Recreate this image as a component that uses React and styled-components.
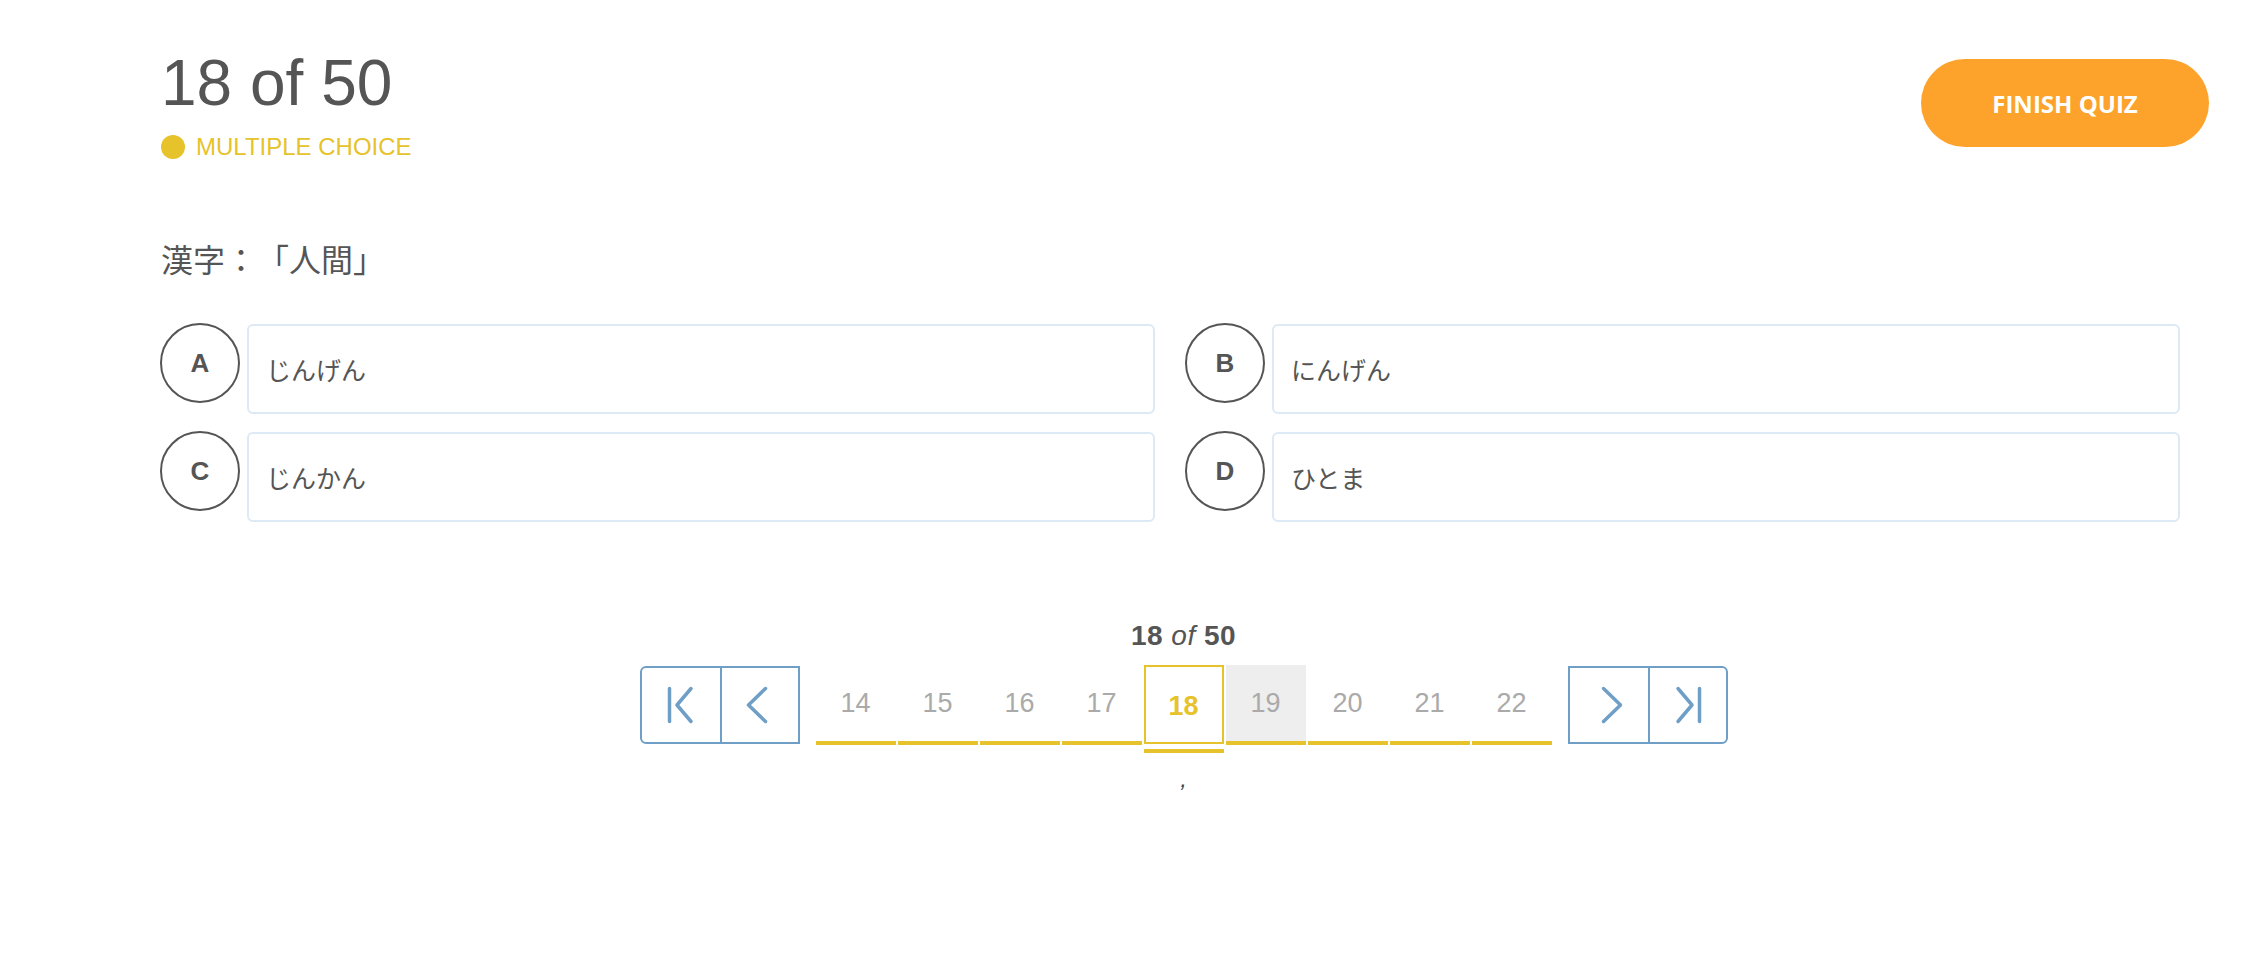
import React from "react";
import styled, { createGlobalStyle, css } from "styled-components";

const yellow = "#e6c22b";
const navBlue = "#6f9fc6";
const textGrey = "#555555";

const GlobalStyle = createGlobalStyle`
  body {
    margin: 0;
    background: #ffffff;
    font-family: "Liberation Sans", Arial, sans-serif;
  }
`;

const Page = styled.div`
  padding: 46px 56px 0 158px;
`;

const Header = styled.header`
  display: flex;
  justify-content: space-between;
  align-items: flex-start;
`;

const Title = styled.h1`
  margin: 0 0 0 3px;
  font-size: 64px;
  line-height: 75px;
  font-weight: 400;
  color: ${textGrey};
`;

const Kind = styled.div`
  display: flex;
  align-items: center;
  gap: 11px;
  margin-top: 12px;
  font-size: 24px;
  line-height: 28px;
  color: ${yellow};
`;

const Dot = styled.span`
  width: 24px;
  height: 24px;
  border-radius: 50%;
  background: ${yellow};
  margin-left: 3px;
`;

const FinishButton = styled.button`
  margin-top: 13px;
  width: 288px;
  height: 88px;
  border: none;
  border-radius: 44px;
  background: #fda22b;
  color: #ffffff;
  font-family: "Open Sans", "Liberation Sans", sans-serif;
  font-weight: 700;
  font-size: 24px;
`;

const Question = styled.p`
  margin: 79px 0 0 3px;
  font-family: "Noto Sans CJK JP", sans-serif;
  font-size: 32px;
  line-height: 36px;
  color: ${textGrey};
  text-spacing-trim: space-all;
`;

const OptionsGrid = styled.div`
  margin-top: 48px;
  margin-left: 2px;
  width: 2020px;
  display: grid;
  grid-template-columns: 1fr 1fr;
  column-gap: 30px;
  row-gap: 18px;
`;

const Option = styled.div`
  display: flex;
  align-items: flex-start;
  gap: 7px;
`;

const Letter = styled.div`
  box-sizing: border-box;
  flex: none;
  width: 80px;
  height: 80px;
  margin-top: -1px;
  border: 2px solid ${textGrey};
  border-radius: 50%;
  display: flex;
  align-items: center;
  justify-content: center;
  font-size: 26px;
  font-weight: 700;
  color: ${textGrey};
`;

const AnswerBox = styled.div`
  box-sizing: border-box;
  flex: 1;
  height: 90px;
  padding-left: 17px;
  border: 2px solid #dde9f4;
  border-radius: 6px;
  display: flex;
  align-items: center;
  font-family: "Noto Sans CJK JP", sans-serif;
  font-size: 25px;
  color: ${textGrey};
`;

const Pager = styled.div`
  margin-top: 99px;
  display: flex;
  flex-direction: column;
  align-items: center;
`;

const PagerLabel = styled.div`
  font-size: 28px;
  line-height: 30px;
  font-weight: 700;
  letter-spacing: 0.5px;
  color: ${textGrey};

  em {
    font-weight: 400;
  }
`;

const PagerRow = styled.div`
  margin-top: 14px;
  display: flex;
  align-items: flex-start;
  gap: 16px;
`;

const NavGroup = styled.div`
  box-sizing: border-box;
  display: flex;
  height: 78px;
  margin-top: 1px;
  border: 2px solid ${navBlue};
  ${(p) =>
    p.side === "left"
      ? css`
          border-radius: 6px 0 0 6px;
        `
      : css`
          border-radius: 0 6px 6px 0;
        `}
`;

const NavButton = styled.button`
  box-sizing: border-box;
  width: 78px;
  height: 100%;
  padding: 0;
  border: none;
  background: none;
  display: flex;
  align-items: center;
  justify-content: center;
  & + & {
    border-left: 2px solid ${navBlue};
  }
`;

const PageList = styled.div`
  display: flex;
  gap: 2px;
`;

const PageItem = styled.div`
  width: 80px;
  display: flex;
  flex-direction: column;
`;

const Cell = styled.div`
  box-sizing: border-box;
  height: ${(p) => (p.active ? "79px" : "76px")};
  display: flex;
  align-items: center;
  justify-content: center;
  font-size: 27px;
  color: ${(p) => (p.active ? yellow : "#aaaaaa")};
  font-weight: ${(p) => (p.active ? 700 : 400)};
  background: ${(p) => (p.hovered ? "#eeeeee" : "transparent")};
  border: ${(p) => (p.active ? `2px solid ${yellow}` : "none")};
  padding-top: ${(p) => (p.active ? "3px" : "0")};
`;

const Bar = styled.div`
  height: 4px;
  margin-top: ${(p) => (p.active ? "5px" : "0")};
  background: ${yellow};
`;

const Stray = styled.div`
  margin-top: 12px;
  font-size: 24px;
  font-style: italic;
  color: #444444;
`;

const NavIcon = ({ kind }) => {
  const paths = {
    first: ["M8.5 3.5V36.5", "M30 3.5L16 20L30 36.5"],
    prev: ["M25.5 3.5L8.5 20L25.5 36.5"],
    next: ["M14.5 3.5L31.5 20L14.5 36.5"],
    last: ["M31.5 3.5V36.5", "M10 3.5L24 20L10 36.5"],
  };
  return (
    <svg width="40" height="40" viewBox="0 0 40 40" fill="none">
      {paths[kind].map((d) => (
        <path
          key={d}
          d={d}
          stroke={navBlue}
          strokeWidth="3.5"
          strokeLinecap="round"
          strokeLinejoin="round"
        />
      ))}
    </svg>
  );
};

const options = [
  { letter: "A", text: "じんげん" },
  { letter: "B", text: "にんげん" },
  { letter: "C", text: "じんかん" },
  { letter: "D", text: "ひとま" },
];

const pages = [14, 15, 16, 17, 18, 19, 20, 21, 22];
const current = 18;

export default function App() {
  return (
    <Page>
      <GlobalStyle />
      <Header>
        <div>
          <Title>18 of 50</Title>
          <Kind>
            <Dot />
            MULTIPLE CHOICE
          </Kind>
        </div>
        <FinishButton>FINISH QUIZ</FinishButton>
      </Header>

      <Question>漢字：「人間」</Question>

      <OptionsGrid>
        {options.map((o) => (
          <Option key={o.letter}>
            <Letter>{o.letter}</Letter>
            <AnswerBox>{o.text}</AnswerBox>
          </Option>
        ))}
      </OptionsGrid>

      <Pager>
        <PagerLabel>
          18 <em>of</em> 50
        </PagerLabel>
        <PagerRow>
          <NavGroup side="left">
            <NavButton>
              <NavIcon kind="first" />
            </NavButton>
            <NavButton>
              <NavIcon kind="prev" />
            </NavButton>
          </NavGroup>
          <PageList>
            {pages.map((n) => (
              <PageItem key={n}>
                <Cell active={n === current} hovered={n === 19}>
                  {n}
                </Cell>
                <Bar active={n === current} />
              </PageItem>
            ))}
          </PageList>
          <NavGroup side="right">
            <NavButton>
              <NavIcon kind="next" />
            </NavButton>
            <NavButton>
              <NavIcon kind="last" />
            </NavButton>
          </NavGroup>
        </PagerRow>
        <Stray>,</Stray>
      </Pager>
    </Page>
  );
}
